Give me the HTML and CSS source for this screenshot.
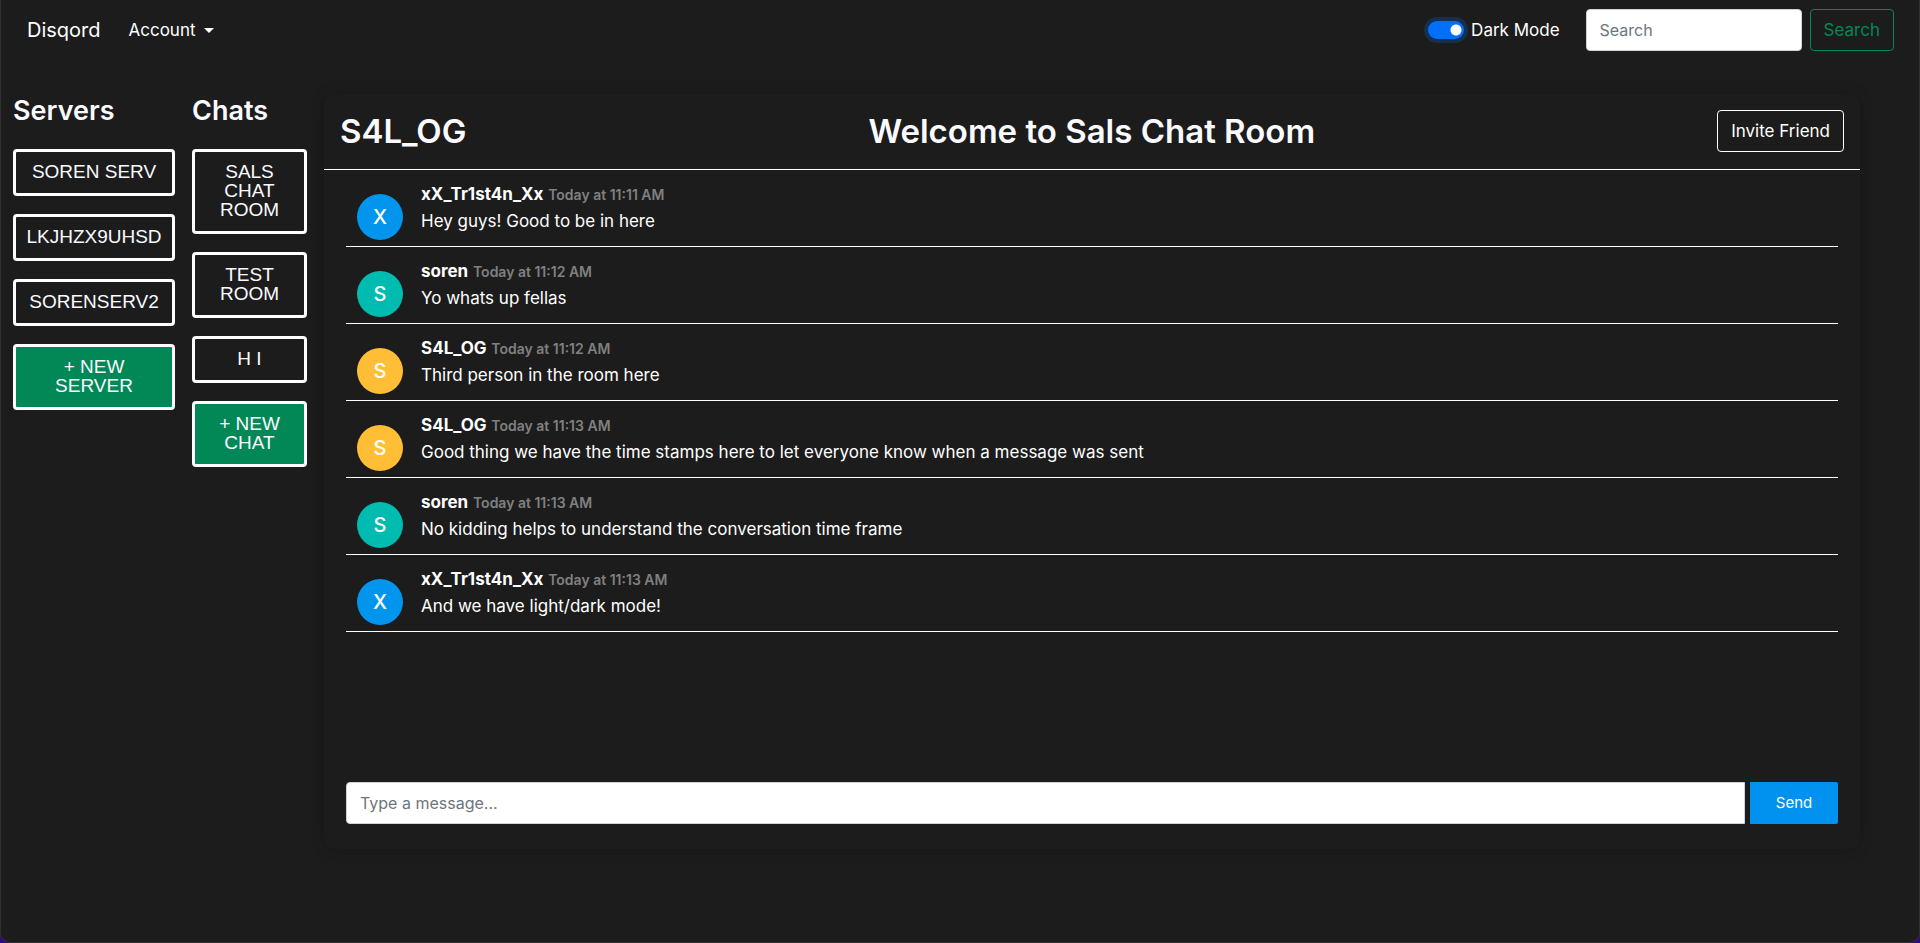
FILE: index.html
```html
<!DOCTYPE html>
<html lang="en">
<head>
<meta charset="utf-8">
<meta name="viewport" content="width=device-width, initial-scale=1">
<title>Disqord</title>
<link rel="stylesheet" href="styles.css">
</head>
<body>
<div class="app">
  <header class="navbar">
    <nav class="nav-links" aria-label="Main">
      <a class="brand" href="#">Disqord</a>
      <button class="dropdown-toggle" type="button" aria-haspopup="true">Account<span class="caret"></span></button>
    </nav>
    <label class="mode-switch"><input class="switch" type="checkbox" role="switch" checked> Dark Mode</label>
    <form class="search-form" role="search">
      <input class="field search-field" type="search" placeholder="Search" aria-label="Search">
      <button class="btn btn-success" type="submit">Search</button>
    </form>
  </header>
  <main class="layout">
    <section class="room-list servers">
      <h2 class="list-title">Servers</h2>
      <button class="room" type="button">SOREN SERV</button>
      <button class="room" type="button">LKJHZX9UHSD</button>
      <button class="room" type="button">SORENSERV2</button>
      <button class="room room-new" type="button">+ NEW SERVER</button>
    </section>
    <section class="room-list chats">
      <h2 class="list-title">Chats</h2>
      <button class="room" type="button">SALS CHAT ROOM</button>
      <button class="room" type="button">TEST ROOM</button>
      <button class="room" type="button">H I</button>
      <button class="room room-new" type="button">+ NEW CHAT</button>
    </section>
    <section class="chat">
      <header class="chat-header">
        <h1 class="chat-title">S4L_OG</h1>
        <h1 class="chat-title">Welcome to Sals Chat Room</h1>
        <button class="btn btn-light" type="button">Invite Friend</button>
      </header>
      <ul class="messages">
        <li class="message">
          <span class="avatar blue">X</span>
          <div class="message-body">
            <div class="meta"><span class="author">xX_Tr1st4n_Xx</span> <time class="time">Today at 11:11 AM</time></div>
            <p class="text">Hey guys! Good to be in here</p>
          </div>
        </li>
        <li class="message">
          <span class="avatar teal">S</span>
          <div class="message-body">
            <div class="meta"><span class="author">soren</span> <time class="time">Today at 11:12 AM</time></div>
            <p class="text">Yo whats up fellas</p>
          </div>
        </li>
        <li class="message">
          <span class="avatar amber">S</span>
          <div class="message-body">
            <div class="meta"><span class="author">S4L_OG</span> <time class="time">Today at 11:12 AM</time></div>
            <p class="text">Third person in the room here</p>
          </div>
        </li>
        <li class="message">
          <span class="avatar amber">S</span>
          <div class="message-body">
            <div class="meta"><span class="author">S4L_OG</span> <time class="time">Today at 11:13 AM</time></div>
            <p class="text">Good thing we have the time stamps here to let everyone know when a message was sent</p>
          </div>
        </li>
        <li class="message">
          <span class="avatar teal">S</span>
          <div class="message-body">
            <div class="meta"><span class="author">soren</span> <time class="time">Today at 11:13 AM</time></div>
            <p class="text">No kidding helps to understand the conversation time frame</p>
          </div>
        </li>
        <li class="message">
          <span class="avatar blue">X</span>
          <div class="message-body">
            <div class="meta"><span class="author">xX_Tr1st4n_Xx</span> <time class="time">Today at 11:13 AM</time></div>
            <p class="text">And we have light/dark mode!</p>
          </div>
        </li>
      </ul>
      <form class="composer">
        <input class="field composer-field" type="text" placeholder="Type a message..." aria-label="Message">
        <button class="send" type="submit">Send</button>
      </form>
    </section>
  </main>
</div>
</body>
</html>
```
FILE: styles.css
```css
* { box-sizing: border-box; }
html { background: #2c0a86; }
body {
  margin: 0;
  color: #fff;
  font: 17px/26px Inter, "Liberation Sans", sans-serif;
}
h1, h2, p, ul { margin: 0; padding: 0; }
button, input { font: inherit; }
.app {
  min-height: 100vh;
  border: 1px solid #303030;
  border-top: 0;
  border-radius: 0 0 10px 10px;
  background: #1c1c1c;
}

.navbar {
  display: flex;
  align-items: center;
  padding: 9px 25px 9px 26px;
}
.nav-links {
  display: flex;
  align-items: center;
  gap: 28px;
  margin-right: auto;
}
.brand { color: #fff; font-size: 20px; text-decoration: none; }
.dropdown-toggle {
  display: flex;
  align-items: center;
  gap: 8px;
  padding: 0;
  border: 0;
  background: none;
  color: #fff;
}
.caret { border: 5px solid transparent; border-top-color: #fff; border-bottom: 0; }
.mode-switch { display: flex; align-items: center; gap: 7px; margin-right: 26px; }
.switch {
  appearance: none;
  width: 36px;
  height: 18px;
  margin: 0;
  border-radius: 9px;
  background: radial-gradient(circle at 28px 9px, #fff 5px, #0070fa00 6px) #0070fa;
  box-shadow: 0 0 0 4px #15304f;
}
.search-form { display: flex; gap: 8px; }
.field {
  height: 42px;
  min-width: 0;
  padding: 0 13px;
  border: 1px solid #ced4da;
  border-radius: 4px;
  background: #fff;
  color: #212529;
  font-size: 16px;
}
.field::placeholder { color: #6c757d; opacity: 1; }
.search-field { width: 216px; }
.btn {
  height: 42px;
  padding: 0 13px;
  border: 1px solid;
  border-radius: 4px;
  background: none;
}
.btn-success { color: #018856; }
.btn-light { color: #fff; }

.layout {
  display: flex;
  align-items: flex-start;
  gap: 17px;
  padding: 34px 59px 34px 12px;
}
.room-list { display: flex; flex: none; flex-direction: column; gap: 18px; }
.servers { width: 162px; }
.chats { width: 115px; }
.list-title { margin-bottom: 4px; font-size: 27px; font-weight: 600; line-height: 33px; color: #fafaff; }
.room {
  padding: 10px 8px 12px;
  border: 3px solid #fff;
  border-radius: 4px;
  background: none;
  color: #fafaff;
  font: 19px/19px "Liberation Sans", Arial, sans-serif;
}
.chats .room { padding: 10px 20px 12px; }
.servers .room-new { padding: 10px 32px 12px; }
.room-new { background: #018856; }

.chat {
  display: flex;
  flex: 1;
  flex-direction: column;
  min-width: 0;
  min-height: 755px;
  border-radius: 12px;
  background: #1c1c1c;
  box-shadow: 0 0 14px #00000030;
}
.chat-header {
  display: flex;
  align-items: center;
  justify-content: space-between;
  padding: 16px 16px 17px;
  border-bottom: 1px solid #fff;
}
.chat-title { font-size: 33px; font-weight: 600; line-height: 42px; color: #fafaff; }
.messages { flex: 1; padding: 0 22px; list-style: none; }
.message {
  display: flex;
  gap: 18px;
  padding: 11px;
  height: 77px;
  border-bottom: 1px solid #fff;
}
.avatar {
  display: flex;
  flex: none;
  align-items: center;
  justify-content: center;
  width: 46px;
  height: 46px;
  margin-top: 13px;
  border-radius: 50%;
  font-size: 20px;
  font-weight: 500;
}
.blue { background: #0195ee; }
.teal { background: #00bbb0; }
.amber { background: #ffbe36; }
.author { font-weight: 700; }
.time { color: #808080; font-size: 14px; font-weight: 600; }
.composer { display: flex; gap: 5px; padding: 0 22px 25px; }
.composer-field { flex: 1; border-radius: 4px 0 0 4px; }
.send {
  width: 88px;
  height: 42px;
  border: 0;
  border-radius: 0 2px 2px 0;
  background: #0191ef;
  color: #fff;
  font-size: 15px;
}
```
